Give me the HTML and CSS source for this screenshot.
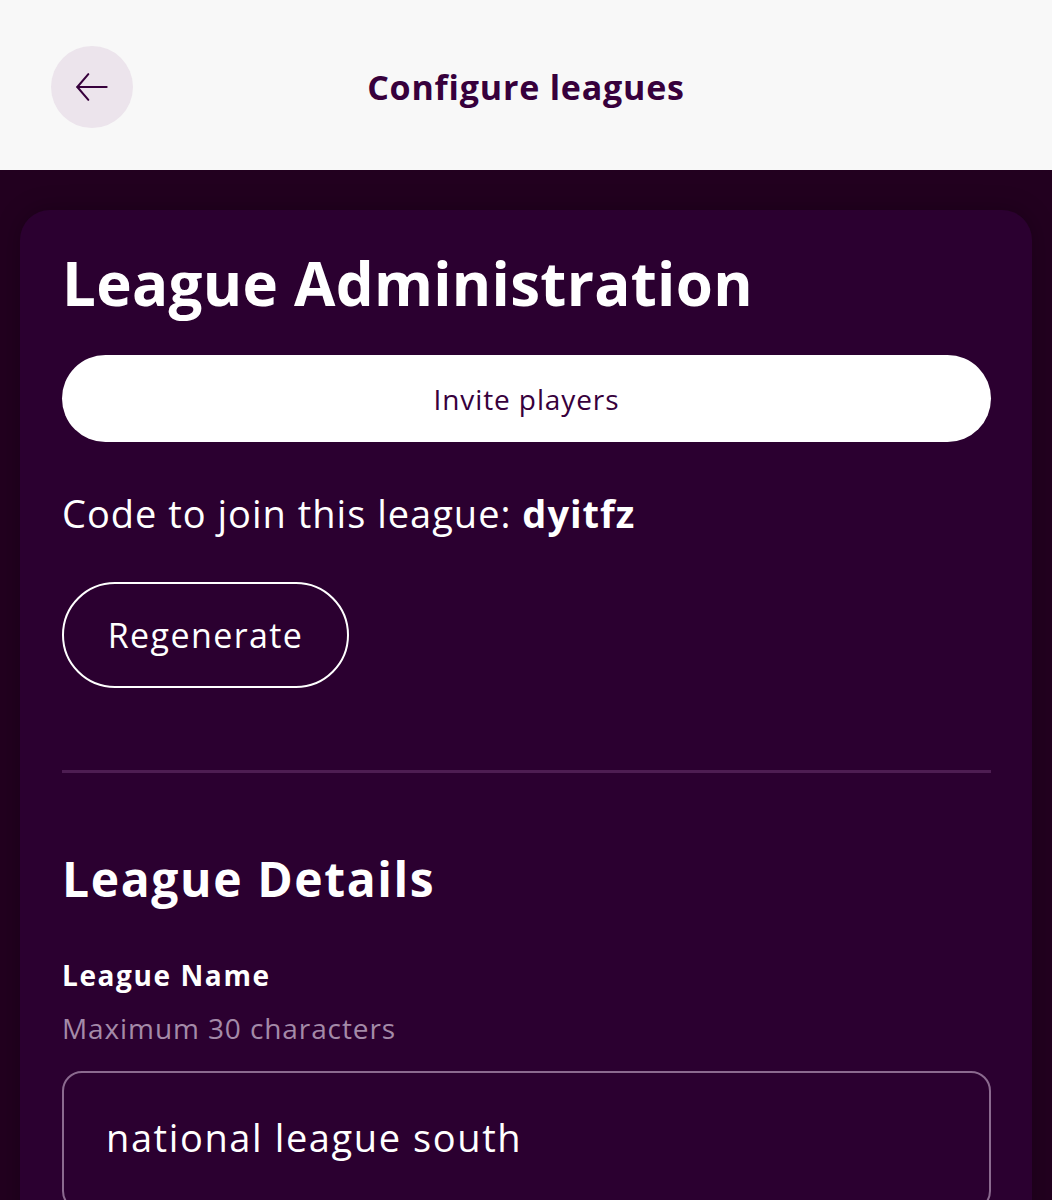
FILE: index.html
```html
<!DOCTYPE html>
<html lang="en">
<head>
  <meta charset="UTF-8">
  <title>Configure leagues</title>
  <link rel="stylesheet" href="styles.css">
</head>
<body>

  <header class="topbar">
    <button class="back-btn" aria-label="Back">
      <svg width="44" height="44" viewBox="0 0 24 24" fill="none" stroke="currentColor" stroke-width="1.1" stroke-linecap="round" stroke-linejoin="round">
        <path d="M20 12H4"/>
        <path d="M10 5L4 12l6 7"/>
      </svg>
    </button>
    <h1 class="topbar-title">Configure leagues</h1>
  </header>

  <main class="page">
    <section class="card">
      <h2 class="card-title">League Administration</h2>
      <button class="btn-invite">Invite players</button>

      <p class="join-code">Code to join this league: <strong>dyitfz</strong></p>

      <button class="btn-outline">Regenerate</button>

      <hr class="divider">

      <h3 class="section-title">League Details</h3>

      <label class="field-label" for="leagueName">League Name</label>
      <p class="field-hint">Maximum 30 characters</p>
      <div class="field-box">
        <input id="leagueName" class="field-input" type="text" value="national league south">
      </div>
    </section>
  </main>

</body>
</html>
```

FILE: styles.css
```css
/* Base */
body {
  margin: 0;
  font-family: 'Open Sans', 'Noto Sans', sans-serif;
  background-color: #22001f;
  color: #fff;
  height: 1200px;
  overflow: hidden;
}

/* Top bar */
.topbar {
  background-color: #f8f8f8;
  height: 170px;
  display: flex;
  align-items: center;
  position: relative;
  box-sizing: border-box;
  padding-left: 51px;
  padding-top: 4px;
}

.back-btn {
  width: 82px;
  height: 82px;
  border-radius: 50%;
  border: none;
  background-color: #ece4ec;
  color: #37003c;
  display: flex;
  align-items: center;
  justify-content: center;
  padding: 0;
  cursor: pointer;
}

.topbar-title {
  position: absolute;
  left: 0;
  right: 0;
  margin: 0 auto;
  width: max-content;
  font-size: 34px;
  font-weight: 700;
  color: #37003c;
  letter-spacing: 0.8px;
  pointer-events: none;
}

/* Content */
.page {
  padding: 40px 20px 0;
}

.card {
  background-color: #2b0030;
  border-radius: 30px;
  padding: 36px 41px 40px 42px;
  min-height: 1100px;
  box-shadow: 0 0 24px rgba(0, 0, 0, 0.25);
}

.card-title {
  margin: 0;
  font-size: 60px;
  font-weight: 700;
  line-height: 74px;
  letter-spacing: 0.3px;
}

.btn-invite {
  display: block;
  width: 100%;
  height: 87px;
  margin-top: 35px;
  border: none;
  border-radius: 44px;
  background-color: #fff;
  color: #37003c;
  font-family: inherit;
  font-size: 28px;
  letter-spacing: 0.9px;
  cursor: pointer;
}

.join-code {
  margin: 48px 0 0;
  font-size: 38px;
  line-height: 46px;
  letter-spacing: 1px;
}

.join-code strong {
  font-weight: 700;
}

.btn-outline {
  display: block;
  margin-top: 46px;
  width: 287px;
  height: 106px;
  border: 2px solid #fff;
  border-radius: 53px;
  background: transparent;
  color: #fff;
  font-family: inherit;
  font-size: 34px;
  letter-spacing: 1.4px;
  cursor: pointer;
}

.divider {
  border: none;
  height: 3px;
  background-color: #4d1d52;
  margin: 82px 0 0;
}

.section-title {
  margin: 76px 0 0;
  font-size: 48px;
  font-weight: 700;
  line-height: 60px;
  letter-spacing: 1.6px;
}

.field-label {
  display: block;
  margin-top: 48px;
  font-size: 28px;
  line-height: 36px;
  font-weight: 700;
  letter-spacing: 1.6px;
}

.field-hint {
  margin: 17px 0 0;
  font-size: 28px;
  line-height: 36px;
  letter-spacing: 0.9px;
  color: #a48aa8;
}

.field-box {
  margin-top: 25px;
  border: 2px solid #8b6a8f;
  border-radius: 20px;
  height: 140px;
  box-sizing: border-box;
  padding: 38px 42px;
}

.field-input {
  width: 100%;
  border: none;
  background: transparent;
  color: #fff;
  font-family: inherit;
  font-size: 38px;
  padding: 0;
  outline: none;
  letter-spacing: 1.6px;
}
```
